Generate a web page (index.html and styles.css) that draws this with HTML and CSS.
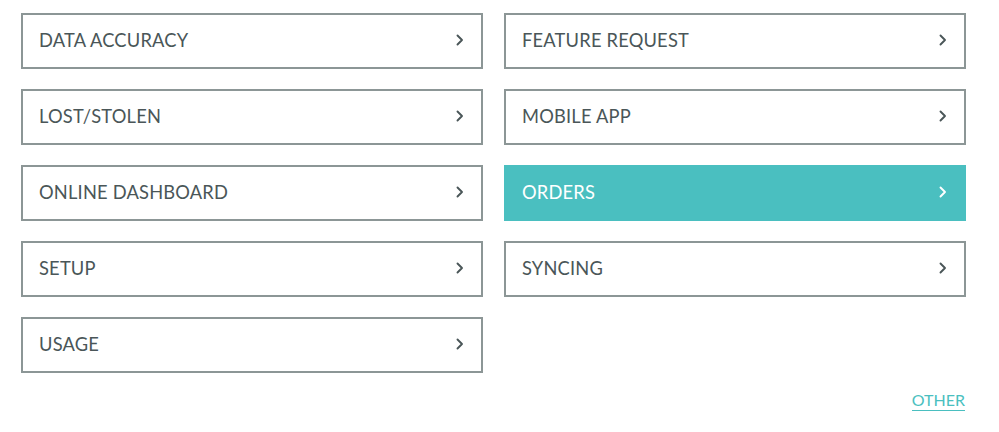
FILE: index.html
```html
<!DOCTYPE html>
<html lang="en">
<head>
    <meta charset="UTF-8">
    <meta name="viewport" content="width=device-width, initial-scale=1.0">
    <link rel="stylesheet" href="styles.css">
    <title>Topics</title>
</head>
<body>
    <div id="topics">
        <div class="topic-grid">
            <a class="topic" href="#">DATA ACCURACY <svg class="chev" viewBox="0 0 8 12"><polyline points="1.5,1.5 6,6 1.5,10.5"/></svg></a>
            <a class="topic" href="#">FEATURE REQUEST <svg class="chev" viewBox="0 0 8 12"><polyline points="1.5,1.5 6,6 1.5,10.5"/></svg></a>
            <a class="topic" href="#">LOST/STOLEN <svg class="chev" viewBox="0 0 8 12"><polyline points="1.5,1.5 6,6 1.5,10.5"/></svg></a>
            <a class="topic" href="#">MOBILE APP <svg class="chev" viewBox="0 0 8 12"><polyline points="1.5,1.5 6,6 1.5,10.5"/></svg></a>
            <a class="topic" href="#">ONLINE DASHBOARD <svg class="chev" viewBox="0 0 8 12"><polyline points="1.5,1.5 6,6 1.5,10.5"/></svg></a>
            <a class="topic active" href="#">ORDERS <svg class="chev" viewBox="0 0 8 12"><polyline points="1.5,1.5 6,6 1.5,10.5"/></svg></a>
            <a class="topic" href="#">SETUP <svg class="chev" viewBox="0 0 8 12"><polyline points="1.5,1.5 6,6 1.5,10.5"/></svg></a>
            <a class="topic" href="#">SYNCING <svg class="chev" viewBox="0 0 8 12"><polyline points="1.5,1.5 6,6 1.5,10.5"/></svg></a>
            <a class="topic" href="#">USAGE <svg class="chev" viewBox="0 0 8 12"><polyline points="1.5,1.5 6,6 1.5,10.5"/></svg></a>
        </div>
        <div class="other-row">
            <a class="other" href="#">OTHER</a>
        </div>
    </div>
</body>
</html>
```

FILE: styles.css
```css
body {
    margin: 0;
    font-family: 'Lato', 'Open Sans', sans-serif;
    background-color: #fff;
    color: #4a5658;
}

#topics {
    width: 945px;
    padding: 13px 0 0 21px;
}

.topic-grid {
    display: grid;
    grid-template-columns: 462px 462px;
    column-gap: 21px;
    row-gap: 20px;
}

.topic {
    display: flex;
    align-items: center;
    justify-content: space-between;
    height: 56px;
    box-sizing: border-box;
    padding: 0 17px 2px 16px;
    border: 2px solid #8c9696;
    color: #4a5658;
    text-decoration: none;
    font-size: 18.3px;
    letter-spacing: 0.2px;
}

.topic.active {
    background-color: #4abfc0;
    border-color: #4abfc0;
    color: #fff;
}

.chev {
    width: 8px;
    height: 12px;
    fill: none;
    stroke: currentColor;
    stroke-width: 1.9;
    stroke-linecap: round;
    stroke-linejoin: round;
}

.other-row {
    display: flex;
    justify-content: flex-end;
    margin-top: 17px;
}

.other {
    margin-right: 1px;
    color: #4abfc0;
    font-size: 16px;
    line-height: 20px;
    text-decoration: none;
    border-bottom: 1px solid #4abfc0;
}
```
